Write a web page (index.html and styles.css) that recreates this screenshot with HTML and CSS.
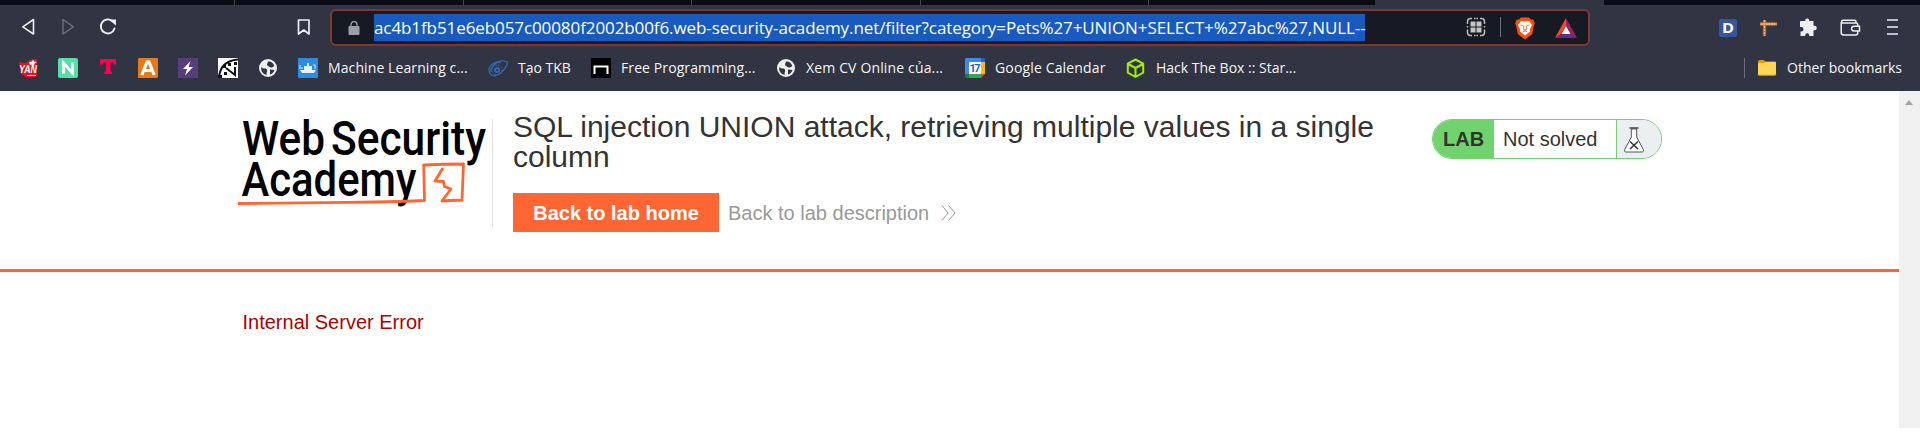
FILE: index.html
```html
<!DOCTYPE html>
<html lang="en">
<head>
<meta charset="utf-8">
<title>SQL injection UNION attack, retrieving multiple values in a single column</title>
<link rel="stylesheet" href="styles.css">
</head>
<body>
<div class="browser">
  <div class="tabs">
    <span class="tab tab-first"></span><span class="tab"></span><span class="tab"></span><span class="tab"></span><span class="tab"></span><span class="tab tab-last"></span><span class="tab-active"></span>
  </div>
  <div class="toolbar">
    <div class="nav">
      <svg class="ico" width="16" height="20" viewBox="0 0 16 20" fill="none" stroke="#eee" stroke-width="1.6" stroke-linejoin="round"><path d="M11.500 2.500v14.500L.8 9.800z"/></svg>
      <svg class="ico fwd" width="16" height="20" viewBox="0 0 16 20" fill="none" stroke="#6b6d78" stroke-width="1.500" stroke-linejoin="round"><path d="M1 2.500v14.500L11.300 9.800z"/></svg>
      <svg class="ico reload" width="20" height="20" viewBox="0 0 20 20" fill="none" stroke="#eee" stroke-width="1.900" stroke-linecap="round"><path d="M13.500 4.200A7 7 0 1 0 15.500 11.500"/><path d="M12.500 3.500h3.500v3z" fill="#eee"/></svg>
      <svg class="ico mark" width="14" height="20" viewBox="0 0 14 20" fill="none" stroke="#eee" stroke-width="1.700" stroke-linejoin="round"><path d="M1.500 3h10.500v14l-5.200-4-5.300 4z"/></svg>
    </div>
    <div class="address">
      <svg class="lock" width="12" height="15" viewBox="0 0 12 15"><rect x=".5" y="5" width="11" height="9" rx="1" fill="#9c9fa8"/><path d="M3 6V3.500a3 3 0 0 1 6 0V6" fill="none" stroke="#9c9fa8" stroke-width="1.400"/></svg>
      <span class="sel"><span class="url">ac4b1fb51e6eb057c00080f2002b00f6.web-security-academy.net/filter?category=Pets%27+UNION+SELECT+%27abc%27,NULL--</span></span>
      <span class="addr-icons">
        <svg width="20" height="20" viewBox="0 0 20 20"><path d="M1.500 7V4.500q0-3 3-3H6M8 1.500h1.500M10.500 1.500H12M14 1.500h1.500q3 0 3 3V7M1.500 9v1.500M18.500 9v1.500M1.500 12.500v3q0 3 3 3H6M8 18.500h1.500M10.500 18.500H12M14 18.500h1.500q3 0 3-3v-3" fill="none" stroke="#bbb" stroke-width="1.500"/><path d="M4.500 4.500h5v5h-5zM10.500 4.500h5v5h-5zM4.500 10.500h5v5h-5zM10.500 10.500h5v5h-5z" fill="#c4c4c4"/></svg>
        <i class="bar"></i>
        <svg class="lion" width="20" height="23" viewBox="0 0 20 23"><path d="M6 .5h8l2 2 2.500.200 1.300 4-1 2-1.600 8.300L10 22.500 2.800 17 1.200 8.700l-1-2 1.300-4L4 2.500z" fill="#ff4f0a"/><path d="M6 4l4 .6 4-.6 3 4-2.200 4.500.3 2L10 18.500 4.900 14.500l.3-2L3 8z" fill="#fff"/><path d="M5.500 8l3 .8M14.500 8l-3 .8M9 9l-.8 3L10 13l1.800-1L11 9M7.500 15l2.500-1.200 2.500 1.200M10 13v1" fill="none" stroke="#ff4f0a" stroke-width=".8"/></svg>
        <svg class="bat" width="24" height="21" viewBox="0 0 24 21"><path d="M12 0l11 20-6.500-4L12 7.500z" fill="#9e1f63"/><path d="M1 20h22l-6.500-4h-9z" fill="#662d91"/><path d="M12 0L1 20l6-4 5-8.500z" fill="#ff4724"/><path d="M12 8l4.500 8h-9z" fill="#fff"/></svg>
      </span>
    </div>
    <div class="extensions">
      <svg width="18" height="18" viewBox="0 0 18 18"><rect width="18" height="18" rx="2" fill="#36579b"/><text x="3" y="14" class="dico" textLength="12" lengthAdjust="spacingAndGlyphs">D</text></svg>
      <svg class="crane" width="18" height="18" viewBox="0 0 18 18"><path d="M4.500 1v16" stroke="#b56c35" stroke-width="3.400"/><path d="M4.500 1v16" stroke="#f0b676" stroke-width="1.200" stroke-dasharray="2 1"/><path d="M0 5h17" stroke="#d58b4b" stroke-width="3"/><path d="M1 5h15" stroke="#ffdfa9" stroke-width="1.200" stroke-dasharray="1.500 1"/></svg>
      <svg class="puzzle" width="19" height="19" viewBox="0 0 19 19"><path d="M2 3h4.200V2.500a2 2 0 0 1 4 0V3h4.300v4.700h1a2.300 2.300 0 0 1 0 4.600h-1V18h-4.300v-.7a2 2 0 0 0-4 0V18H1.500v-4.500h.8a2.200 2.200 0 0 0 0-4.400H1V4q0-1 1-1z" fill="#eee"/></svg>
      <svg class="wallet" width="21" height="18" viewBox="0 0 21 18" fill="none" stroke="#eee" stroke-width="1.500"><path d="M3 1.200h11.500q1.500 0 1.500 2M1.200 3v10.500q0 2.500 2.500 2.500h12q2 0 2-2v-2M17.700 7V5.500q0-1.500-1.500-1.500H3a1.400 1.400 0 0 1 0-2.800"/><path d="M19.500 7.200H14a2.400 2.400 0 0 0 0 4.800h5.500z"/></svg>
      <svg class="menu" width="12" height="18" viewBox="0 0 12 18"><path d="M0 2h11M0 9h11M0 16h11" stroke="#eee" stroke-width="1.600"/></svg>
    </div>
  </div>
  <div class="bookmarks">
    <svg class="bm" viewBox="0 0 20 20"><path d="M1 4l6 1 5-3 7-1v16l-2 2H8l-5-3z" fill="#d81920"/><text x="1" y="15" class="yan" textLength="18" lengthAdjust="spacingAndGlyphs">YAN</text><path d="M11 4l3-.5 1-2 1 2 3 .5-2.500 1.500L16 8l-2-1.500-2 .5z" fill="#fff"/><path d="M9 17.500h9" stroke="#fff"/></svg>
    <svg class="bm" viewBox="0 0 20 20"><rect width="20" height="20" rx="2" fill="#55e0a8"/><path d="M5.500 15.500V5l9 10V4.500" fill="none" stroke="#fff" stroke-width="2.800"/></svg>
    <svg class="bm" viewBox="0 0 20 20"><path d="M2 1h16v5.500h-2.500v-2h-3v9H14V16H6.500v-2.500H8v-9H5v2H2z" fill="#ff0050"/></svg>
    <svg class="bm" viewBox="0 0 20 20"><path d="M1 0h19v19l-1 1H0V1z" fill="#e67a17"/><path d="M3.800 17L9 4h2l5.200 13M6.500 12.500h7" fill="none" stroke="#fff" stroke-width="3.200"/></svg>
    <svg class="bm" viewBox="0 0 20 20"><rect width="20" height="20" fill="#563d7c"/><path d="M12.500 3L5 11h4l-2 6.500L15 9h-4.500z" fill="#fff"/></svg>
    <svg class="bm" viewBox="0 0 20 20"><rect width="20" height="20" fill="#fff"/><path d="M1 20Q2 3 20 1.500" fill="none" stroke="#111" stroke-width="2"/><path d="M8 10l9 7V9" fill="none" stroke="#111" stroke-width="2"/><path d="M5 7h3v3H5zM10 5h3v3h-3zM16 4h3v3h-3zM6 14h3v3H6zM0 17h4v3H0z" fill="#111"/></svg>
    <svg class="bm" viewBox="0 0 20 20"><circle cx="10" cy="10" r="9" fill="#eee"/><path d="M3.500 9c2 2.500 5 .5 5.500 3s-1 2 0 4.800C4.500 16.500 2.500 12.500 3.500 9zM10 3.500c3.500-.2 5.500 2 6.300 4.500-1.500 1.500-3 2-4.500 1S9.500 8 9 6.500zM12 11.500l4.500.500c-.8 2.500-2.500 4-4.500 4.500z" fill="#313442"/></svg>
    <div class="link w190"><svg class="bm" viewBox="0 0 20 20"><rect width="20" height="20" fill="#2b8be0"/><path d="M4 15l-2-3h16l-2 3zM6 8h8v4H6zM9 5h2v3H9z" fill="#e2f1ff"/><path d="M2 7v4M4 9v2M15 7q3-1 2 4M7 9h1M10 9h1" fill="none" stroke="#bfe0ff" stroke-width="1.200"/></svg><span class="t1">Machine Learning c...</span></div>
    <div class="link w103"><svg class="bm" viewBox="0 0 20 20" fill="none" stroke="#3468ad"><path d="M13 5C8 2 1 7 1 12c0 4 3 6 7 6M18 4c-4-4-16 3-15 10M19 3c1 6-7 15-13 14" stroke-width="1.300"/><circle cx="9" cy="12" r="5" stroke-dasharray="2 1"/><circle cx="9" cy="12" r="2" stroke-width="2"/></svg><span class="t2">Tạo TKB</span></div>
    <div class="link w185"><svg class="bm" viewBox="0 0 20 20"><rect width="20" height="20" fill="#000"/><path d="M3.500 16V8.500h13V16" fill="none" stroke="#fff" stroke-width="2"/></svg><span class="t3">Free Programming...</span></div>
    <div class="link w189"><svg class="bm" viewBox="0 0 20 20"><circle cx="10" cy="10" r="9" fill="#eee"/><path d="M3.500 9c2 2.500 5 .5 5.500 3s-1 2 0 4.800C4.500 16.500 2.500 12.500 3.500 9zM10 3.500c3.500-.2 5.500 2 6.300 4.500-1.500 1.500-3 2-4.500 1S9.500 8 9 6.500zM12 11.500l4.500.500c-.8 2.500-2.500 4-4.500 4.500z" fill="#313442"/></svg><span class="t4">Xem CV Online của...</span></div>
    <div class="link w161"><svg class="bm" viewBox="0 0 20 20"><path d="M1 0h15v4H4v12H0V1z" fill="#4285f4"/><path d="M16 0h3l1 1v3h-4z" fill="#1967d2"/><path d="M16 4h4v12h-4z" fill="#fbbc04"/><path d="M4 16h12v4H4z" fill="#34a853"/><path d="M0 16h4v4H1l-1-1z" fill="#188038"/><path d="M16 16h4l-4 4z" fill="#ea4335"/><path d="M4 4h12v12H4z" fill="#fff"/><text x="4.500" y="14" class="cal" textLength="11">17</text></svg><span class="t5">Google Calendar</span></div>
    <div class="link"><svg class="bm" viewBox="0 0 20 20" fill="none" stroke="#9fef00" stroke-width="2" stroke-linejoin="round"><path d="M9.500 1.500l7.700 4.200v9L9.500 19l-7.700-4.300v-9zM2 6l7.500 4L17 6M9.500 10v8"/></svg><span class="t6">Hack The Box :: Star...</span></div>
    <div class="other"><i class="bar"></i><svg class="bm" viewBox="0 0 20 20"><path d="M1 4q0-2 2-2h3.500l2 1.500H18q1 0 1 1V8H1z" fill="#dea000"/><path d="M1 6q0-1 1-1h5l1.500-1H18q1 0 1 1v11q0 1-1 1H2q-1 0-1-1z" fill="#ffd557"/><path d="M1 16.500q0 .8 1 .8h16q1 0 1-.8" fill="none" stroke="#d99b10"/></svg><span class="t7">Other bookmarks</span></div>
  </div>
</div>
<div class="viewport">
  <main class="page">
    <header class="lab-header">
      <svg class="logo" width="256" height="108" viewBox="0 0 255 108">
        <g class="logo-text">
          <text x="5" y="36.300" textLength="83" lengthAdjust="spacingAndGlyphs">Web</text>
          <text x="94" y="36.300" textLength="155" lengthAdjust="spacingAndGlyphs">Security</text>
          <text x="4.500" y="76.800" textLength="175" lengthAdjust="spacingAndGlyphs">Academy</text>
        </g>
        <path d="M1 84.500Q50 84 110 83.300T187.500 81.500L186.700 46Q206 45 226.500 45L225 81.300Q215 81 205 82L214 70 207.500 67.500 206.500 62.500 198 62 206 49" fill="none" stroke="#f63" stroke-width="2.800" stroke-linejoin="round"/>
      </svg>
      <div class="title-area">
        <h2>SQL injection UNION attack, retrieving multiple values in a single column</h2>
        <div class="actions"><a class="button">Back to lab home</a><a class="back">Back to lab description</a>
          <svg width="16" height="16" viewBox="0 0 16 16" fill="none" stroke="#999"><path d="M1 .5l6 7.500-6 7.500M7.500.5l6.500 7.500-6.500 7.500"/></svg></div>
      </div>
      <div class="status"><span class="lab">LAB</span><span class="state">Not solved</span><span class="flask"><svg width="20" height="26" viewBox="0 0 20 26"><path d="M7.300 2v8L.7 22.500q-.7 2.500 1 2.500h16.600q1.700 0 1-2.500L12.700 10V2z" fill="#fff" stroke="#444" stroke-width=".9"/><path d="M5.500 1h9" stroke="#444" stroke-width="1.500"/><path d="M6 14.500l8 7.500M14 14.500L6 22" stroke="#333" stroke-width="1.500"/></svg></span></div>
    </header>
    <p class="error">Internal Server Error</p>
  </main>
  <div class="scrollbar"><i class="arrow"></i></div>
</div>
</body>
</html>
```

FILE: styles.css
```css
* { box-sizing: border-box; }
body { margin: 0; width: 1920px; height: 438px; overflow: hidden; background: #fff; font-family: "Liberation Sans", Arial, sans-serif; }
svg { display: block; flex: none; }
.browser { height: 91px; background: #313442; font-family: "Open Sans", "Noto Sans", sans-serif; color: #f4f4f6; }
.tabs { display: flex; height: 5px; background: #0b0b16; }
.tab { width: 228.500px; border-right: 1px solid #43444c; }
.tab-first { width: 235px; }
.tab-last { width: 226px; border: 0; }
.tab-active { width: 229px; background: #313442; }
.toolbar { display: flex; height: 46px; padding-top: 4px; }
.nav { display: flex; width: 330px; padding: 8px 0 0 22px; }
.fwd { margin-left: 24px; }
.reload { margin-left: 21px; }
.mark { margin-left: 178px; }
.address { display: flex; align-items: flex-start; width: 1260px; height: 37px; padding: 3px 10px 0 16px; border: 2px solid #7f3831; border-radius: 6px; background: #171a22; }
.lock { margin-top: 7px; }
.sel { width: 991px; height: 27px; margin-left: 14px; background: #195abe; white-space: nowrap; line-height: 27px; }
.url { font-size: 17px; letter-spacing: -0.090px; color: #fff; }
.addr-icons { display: flex; margin-left: auto; padding-top: 3px; }
.bar { width: 1px; height: 20px; background: #6d6f79; }
.addr-icons .bar { margin-left: 14px; }
.lion { margin-left: 14px; }
.bat { margin: 1px 0 0 19px; }
.extensions { display: flex; padding: 10px 0 0 129px; }
.dico { font: bold 15px "Open Sans", sans-serif; fill: #fff; }
.crane { margin-left: 23px; }
.puzzle { margin-left: 21px; margin-top: -1px; }
.wallet { margin-left: 22px; }
.menu { margin-left: 26px; margin-top: -1px; }
.bookmarks { display: flex; padding: 7px 0 0 18px; }
.bm { width: 20px; height: 20px; margin-right: 20px; }
.link, .other { display: flex; font-size: 14px; line-height: 20px; white-space: nowrap; }
.link .bm, .other .bm { margin-right: 10px; }
.t1, .t3 { letter-spacing: 0.100px; }
.t4, .t5 { letter-spacing: 0.150px; }
.w190 { width: 190px; }
.w103 { width: 103px; }
.w185 { width: 185px; }
.w189 { width: 189px; }
.w161 { width: 161px; }
.other { margin-left: auto; padding-right: 18px; }
.other .bm { margin-left: 12px; }
.yan { font: italic bold 11px "Liberation Sans", sans-serif; fill: #fff; }
.cal { font: bold 11px Roboto, sans-serif; fill: #1a66d2; }
.viewport { display: flex; height: 337px; }
.page { width: 1899px; }
.lab-header { display: flex; height: 181px; padding: 28px 0 0 237px; border-bottom: 3px solid #f63; }
.logo { border-right: 1px solid #e2e2e2; }
.logo-text { font: 500 49px Roboto, sans-serif; fill: #000; }
.title-area { width: 919px; padding-left: 20px; }
h2 { width: 880px; margin: -7px 0 0; font-size: 30px; font-weight: 400; line-height: 30px; color: #333332; }
.actions { display: flex; align-items: center; margin-top: 21px; font-size: 20px; }
.button { width: 206px; height: 39px; background: #f63; color: #fff; font-weight: 700; line-height: 40px; text-align: center; }
.back { margin: 1px 12px 0 9px; color: #999; }
.status { display: flex; width: 230px; height: 40px; margin-left: 20px; overflow: hidden; border: 1px solid #70d36d; border-radius: 20px; font-size: 20px; line-height: 39px; color: #333332; }
.lab { width: 61px; padding-left: 10px; background: #70d36d; font-weight: 700; }
.state { width: 123px; padding-left: 9px; border-right: 1px solid #70d36d; }
.flask { flex: 1; padding: 7px 0 0 7px; background: #eaeff3; }
.error { margin: 39px 0 0 242.500px; font-size: 20px; line-height: 23px; color: #b00000; }
.scrollbar { width: 21px; padding: 9px 0 0 6px; background: #f0f0f0; }
.arrow { display: block; width: 0; height: 0; border: 4.500px solid transparent; border-bottom: 5px solid #a3a3a3; border-top: 0; }
```
